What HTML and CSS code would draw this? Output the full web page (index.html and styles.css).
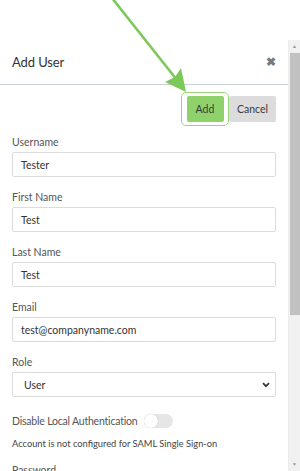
FILE: index.html
```html
<!DOCTYPE html>
<html>
<head>
<meta charset="utf-8">
<link rel="stylesheet" href="styles.css">
</head>
<body>
<div class="top"></div>
<div class="frame">
  <div class="dialog">
    <div class="header">
      <span class="title">Add User</span>
      <span class="close">&#10006;</span>
    </div>
    <div class="body">
      <div class="actions">
        <span class="ring"><button class="btn btn-add">Add</button></span>
        <button class="btn btn-cancel">Cancel</button>
      </div>
      <div class="group">
        <label class="label">Username</label>
        <div class="input">Tester</div>
      </div>
      <div class="group">
        <label class="label">First Name</label>
        <div class="input">Test</div>
      </div>
      <div class="group">
        <label class="label">Last Name</label>
        <div class="input">Test</div>
      </div>
      <div class="group">
        <label class="label">Email</label>
        <div class="input">test@companyname.com</div>
      </div>
      <div class="group">
        <label class="label">Role</label>
        <div class="input select"><span>User</span>
          <svg width="8" height="6" viewBox="0 0 8 6"><path d="M1 1.2 L4 4.2 L7 1.2" fill="none" stroke="#333" stroke-width="1.7"/></svg>
        </div>
      </div>
      <div class="toggle-row">
        <span class="label-lg">Disable Local Authentication</span>
        <span class="toggle"><span class="knob"></span></span>
      </div>
      <div class="note">Account is not configured for SAML Single Sign-on</div>
      <div class="label pw">Password</div>
    </div>
  </div>
  <div class="scrollbar">
    <span class="sb-arrow">&#9650;</span>
    <div class="thumb"></div>
    <div class="sb-fill"></div>
    <span class="sb-arrow">&#9660;</span>
  </div>
</div>
<svg class="pointer" width="300" height="120" viewBox="0 0 300 120">
  <line x1="112" y1="-2" x2="177" y2="80" stroke="#7cc95a" stroke-width="2.6"/>
  <path d="M186 92 L165 82 L175 77 L181 68 Z" fill="#7cc95a"/>
</svg>
</body>
</html>
```
FILE: styles.css
```css
html, body {
  margin: 0;
  padding: 0;
}
body {
  width: 300px;
  height: 471px;
  overflow: hidden;
  background: #fff;
  font-family: Lato, "Liberation Sans", sans-serif;
  color: #333;
  position: relative;
}
.top {
  height: 40px;
}
.frame {
  display: flex;
  height: 431px;
}
.dialog {
  flex: 1;
  min-width: 0;
}
.header {
  height: 44px;
  border-bottom: 1px solid #c9d0d7;
  display: flex;
  align-items: center;
  justify-content: space-between;
  padding: 0 12px 0 12px;
}
.title {
  font-size: 13px;
  color: #333;
  letter-spacing: -0.1px;
}
.close {
  font-size: 11.5px;
  color: #7a7a7a;
  font-weight: bold;
}
.body {
  padding: 0 12px;
}
.actions {
  display: flex;
  justify-content: flex-end;
  align-items: center;
  margin-top: 7px;
}
.ring {
  display: inline-flex;
  padding: 3px 4.5px;
  border: 1.5px solid #9ad67a;
  border-radius: 5px;
}
.btn {
  font-family: Lato, "Liberation Sans", sans-serif;
  font-size: 10.5px;
  height: 26px;
  border: none;
  border-radius: 2px;
  padding: 0;
  color: #3a3a3a;
}
.btn-add {
  width: 37px;
  background: #8fd26b;
}
.btn-cancel {
  width: 47px;
  background: #dcdcdc;
}
.group {
  margin-top: 9px;
  margin-bottom: 5px;
}
.group + .group {
  margin-top: 13px;
}
.label {
  display: block;
  font-size: 10.5px;
  line-height: 14px;
  color: #555;
  margin-bottom: 3px;
}
.input {
  height: 25px;
  box-sizing: border-box;
  border: 1px solid #dcdcdc;
  border-radius: 2px;
  padding: 0 8px;
  font-size: 10.5px;
  display: flex;
  align-items: center;
  color: #333;
}
.select {
  justify-content: space-between;
  padding: 0 5px 0 11px;
}
.toggle-row {
  display: flex;
  align-items: center;
  gap: 6px;
  margin-top: 17px;
}
.label-lg {
  font-size: 10.5px;
  letter-spacing: -0.2px;
  color: #555;
}
.toggle {
  width: 29px;
  height: 14px;
  border-radius: 7px;
  background: #e6e6e6;
  display: flex;
  align-items: center;
}
.knob {
  width: 14px;
  height: 14px;
  border-radius: 50%;
  background: #fff;
  box-shadow: 0 0 1px rgba(0,0,0,0.25);
}
.note {
  font-size: 9.3px;
  color: #444;
  margin-top: 10px;
}
.pw {
  margin-top: 14px;
}
.scrollbar {
  width: 12px;
  background: #f1f1f1;
  display: flex;
  flex-direction: column;
  align-items: center;
  border-left: 1px solid #ececec;
  box-sizing: border-box;
}
.sb-arrow {
  font-size: 5px;
  color: #9a9a9a;
  height: 13px;
  line-height: 13px;
}
.thumb {
  width: 10px;
  height: 262px;
  background: #c1c1c1;
}
.sb-fill {
  flex: 1;
}
.pointer {
  position: absolute;
  left: 0;
  top: 0;
  pointer-events: none;
}
```
